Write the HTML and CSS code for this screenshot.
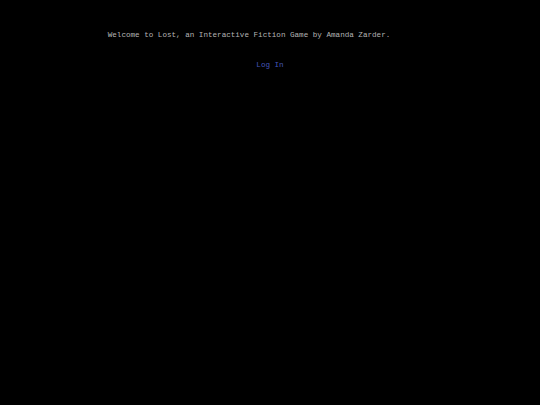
FILE: index.html
```html
<!DOCTYPE html>
<html>
<head>
<meta charset="utf-8">
<link rel="stylesheet" href="styles.css">
</head>
<body class="page">
<div class="intro">Welcome to Lost, an Interactive Fiction Game by Amanda Zarder.</div>
<div class="login"><a class="login-link" href="#">Log In</a></div>
</body>
</html>
```
FILE: styles.css
```css
html, body {
  margin: 0;
  padding: 0;
  background: #000;
}
.page {
  font-family: "Courier New", "Liberation Mono", monospace;
  font-size: 7.6px;
  color: #b4b4b4;
  padding-top: 30px;
}
.intro {
  text-align: center;
  padding-right: 42px;
  line-height: 10px;
}
.login {
  text-align: center;
  margin-top: 20px;
  line-height: 10px;
}
.login-link {
  color: #4456b8;
  text-decoration: none;
}
```
